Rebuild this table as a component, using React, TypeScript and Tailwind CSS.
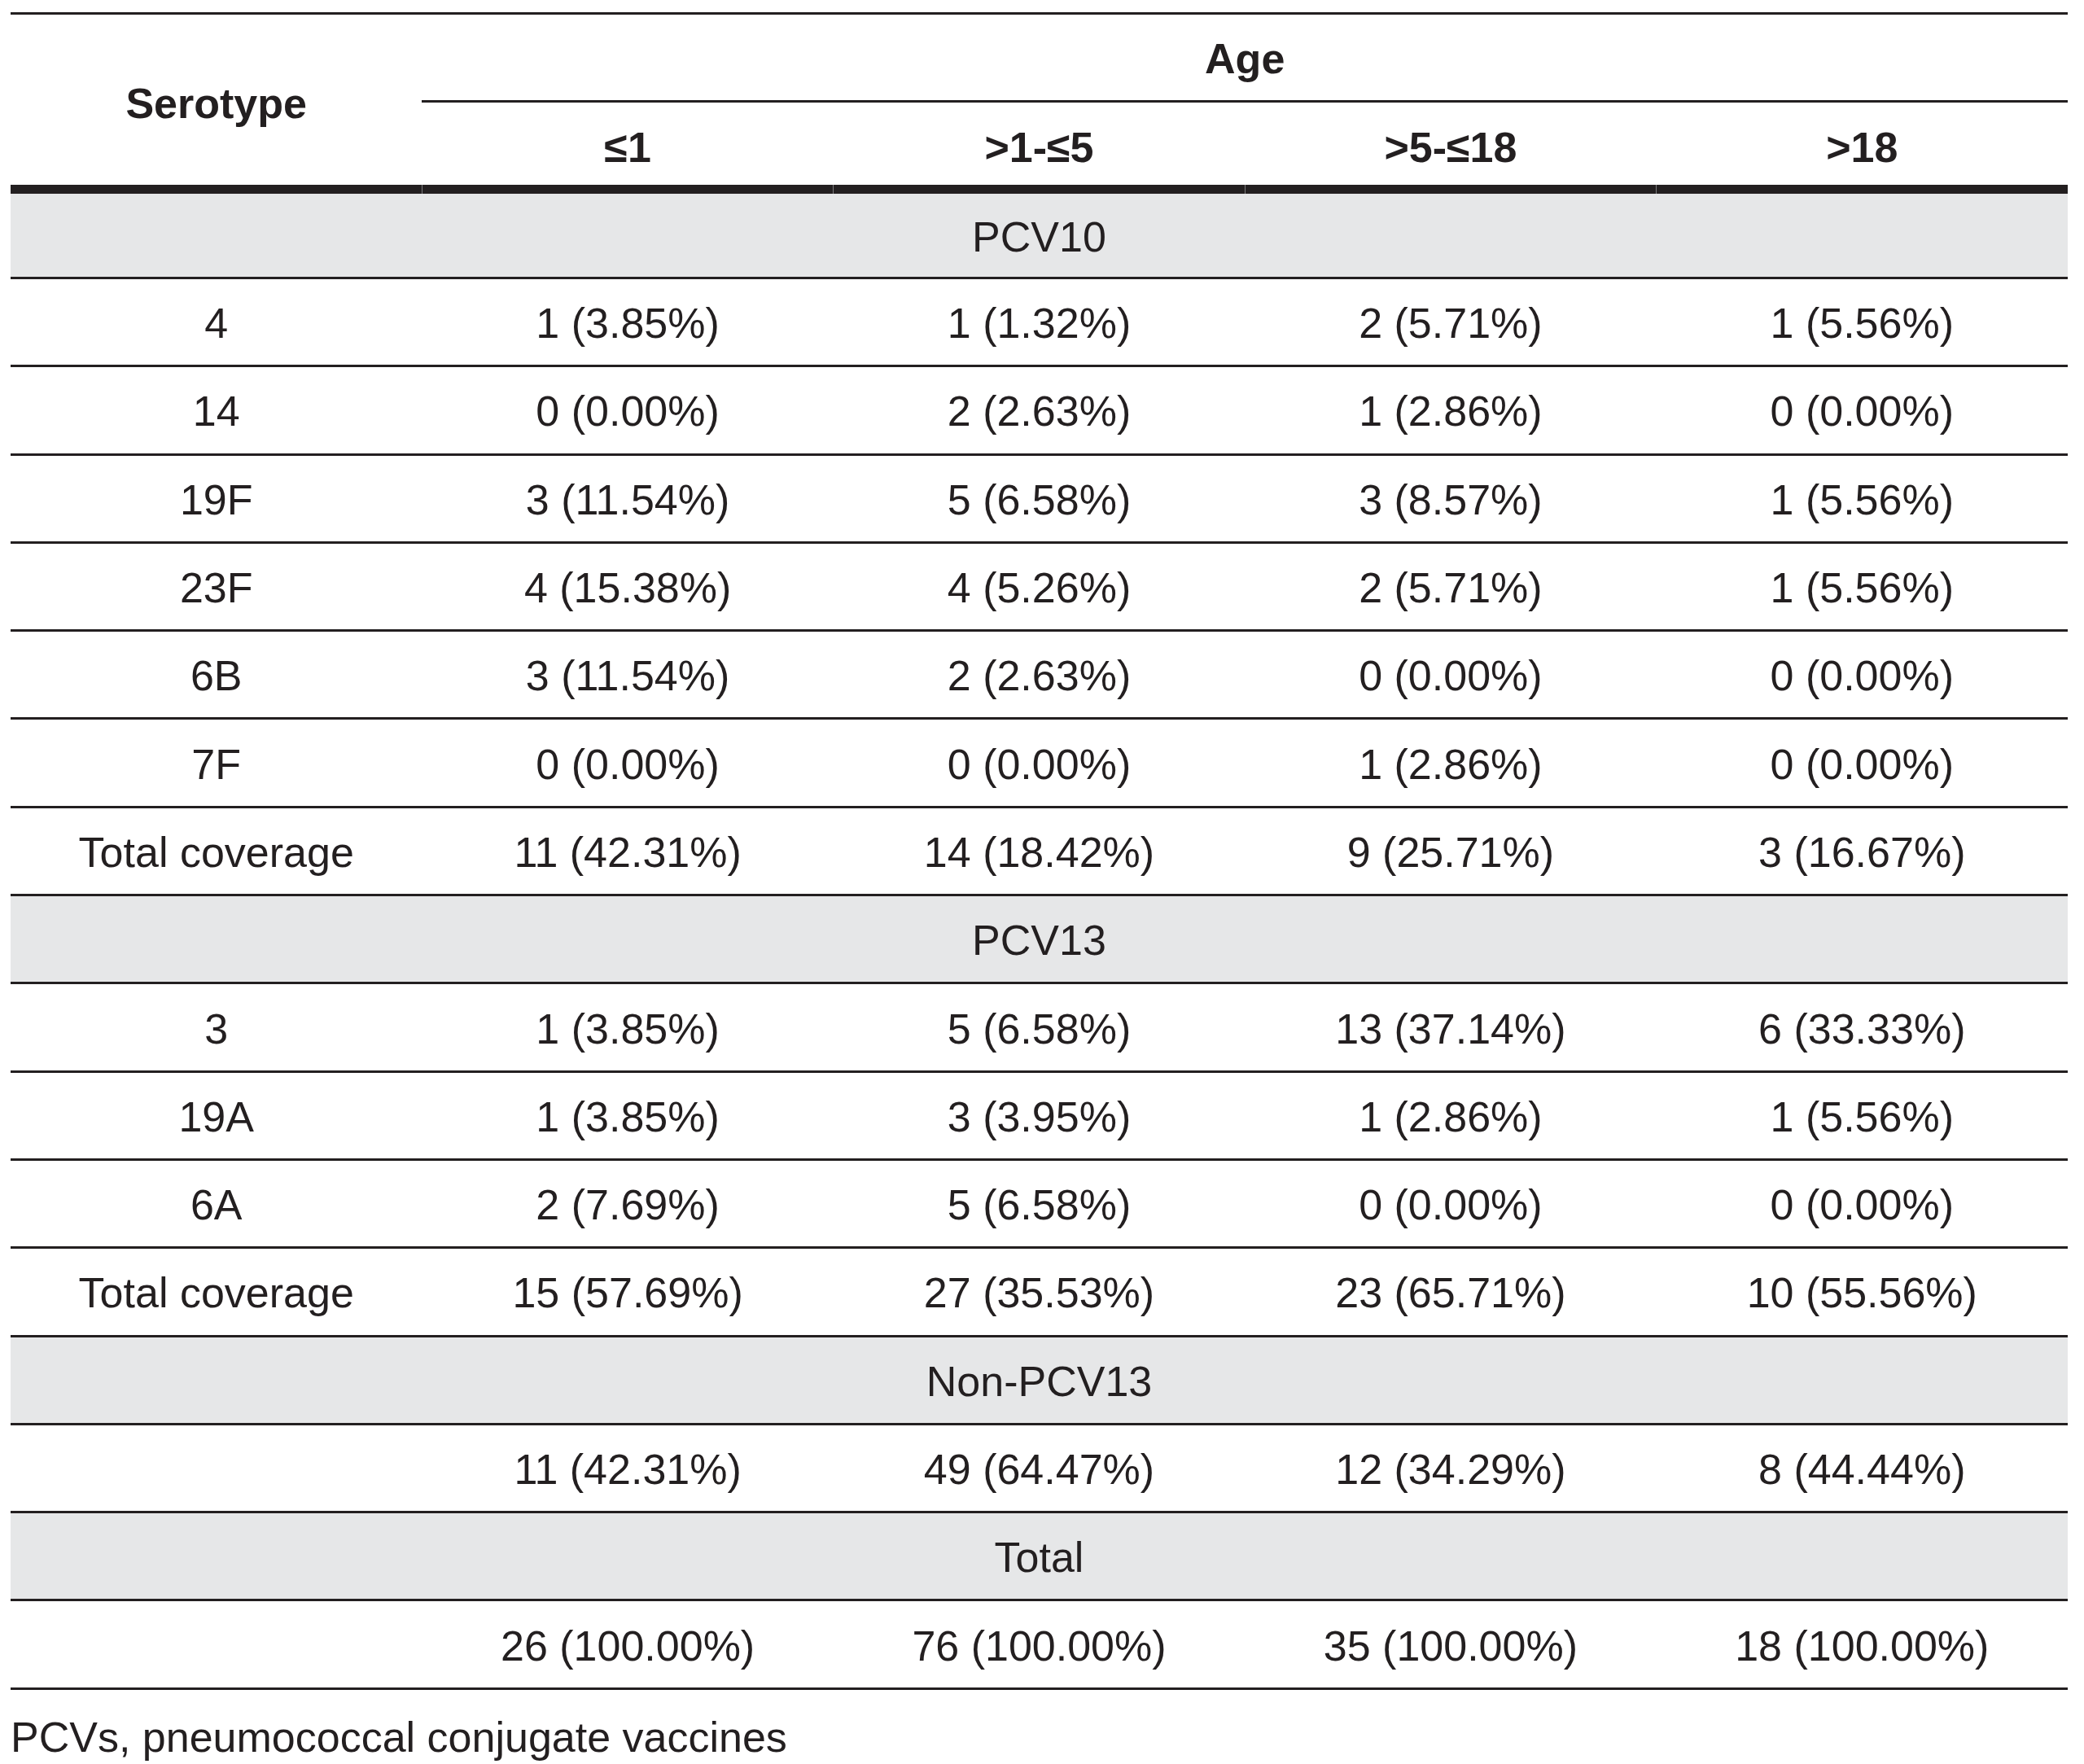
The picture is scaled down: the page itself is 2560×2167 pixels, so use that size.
const ages = ["≤1", ">1-≤5", ">5-≤18", ">18"];

type Row = { label: string; cells: string[] };
type Section = { title: string; rows: Row[] };

const sections: Section[] = [
  {
    title: "PCV10",
    rows: [
      { label: "4", cells: ["1 (3.85%)", "1 (1.32%)", "2 (5.71%)", "1 (5.56%)"] },
      { label: "14", cells: ["0 (0.00%)", "2 (2.63%)", "1 (2.86%)", "0 (0.00%)"] },
      { label: "19F", cells: ["3 (11.54%)", "5 (6.58%)", "3 (8.57%)", "1 (5.56%)"] },
      { label: "23F", cells: ["4 (15.38%)", "4 (5.26%)", "2 (5.71%)", "1 (5.56%)"] },
      { label: "6B", cells: ["3 (11.54%)", "2 (2.63%)", "0 (0.00%)", "0 (0.00%)"] },
      { label: "7F", cells: ["0 (0.00%)", "0 (0.00%)", "1 (2.86%)", "0 (0.00%)"] },
      { label: "Total coverage", cells: ["11 (42.31%)", "14 (18.42%)", "9 (25.71%)", "3 (16.67%)"] },
    ],
  },
  {
    title: "PCV13",
    rows: [
      { label: "3", cells: ["1 (3.85%)", "5 (6.58%)", "13 (37.14%)", "6 (33.33%)"] },
      { label: "19A", cells: ["1 (3.85%)", "3 (3.95%)", "1 (2.86%)", "1 (5.56%)"] },
      { label: "6A", cells: ["2 (7.69%)", "5 (6.58%)", "0 (0.00%)", "0 (0.00%)"] },
      { label: "Total coverage", cells: ["15 (57.69%)", "27 (35.53%)", "23 (65.71%)", "10 (55.56%)"] },
    ],
  },
  {
    title: "Non-PCV13",
    rows: [{ label: "", cells: ["11 (42.31%)", "49 (64.47%)", "12 (34.29%)", "8 (44.44%)"] }],
  },
  {
    title: "Total",
    rows: [{ label: "", cells: ["26 (100.00%)", "76 (100.00%)", "35 (100.00%)", "18 (100.00%)"] }],
  },
];

export default function App() {
  return (
    <div className="min-h-screen bg-white text-[#231f20] text-[52px] font-['Liberation_Sans',Arial,sans-serif]">
      <div className="pl-[13px] pt-[15px] w-[2540px]">
        {/* header */}
        <div className="flex border-t-[3px] border-[#231f20]">
          <div className="w-1/5 flex items-center justify-center font-bold pt-[8px]">Serotype</div>
          <div className="flex-1 flex flex-col">
            <div className="h-[108px] flex items-center justify-center font-bold border-b-[3px] border-[#231f20] pt-[3px]">
              Age
            </div>
            <div className="h-[101px] grid grid-cols-4 items-center text-center font-bold pt-[8px]">
              {ages.map((a) => (
                <div key={a}>{a}</div>
              ))}
            </div>
          </div>
        </div>
        <div className="grid grid-cols-5 gap-px bg-[#7a7a7c] h-[11px]">
          {[0, 1, 2, 3, 4].map((i) => (
            <div key={i} className="bg-[#231f20]" />
          ))}
        </div>

        {sections.map((s, si) => (
          <div key={s.title}>
            <div
              className={`${si === 0 ? "h-[99px]" : "h-[102.3px]"} bg-[#e6e7e8] border-b-[3px] border-[#231f20] flex items-center justify-center box-content pt-[3px]`}
            >
              {s.title}
            </div>
            {s.rows.map((r, ri) => (
              <div
                key={ri}
                className="h-[102.3px] box-content grid grid-cols-5 items-center text-center border-b-[3px] border-[#231f20] pt-[3px]"
              >
                <div>{r.label}</div>
                {r.cells.map((c, ci) => (
                  <div key={ci}>{c}</div>
                ))}
              </div>
            ))}
          </div>
        ))}

        <p className="pt-[28px] leading-[60px]">PCVs, pneumococcal conjugate vaccines</p>
      </div>
    </div>
  );
}
